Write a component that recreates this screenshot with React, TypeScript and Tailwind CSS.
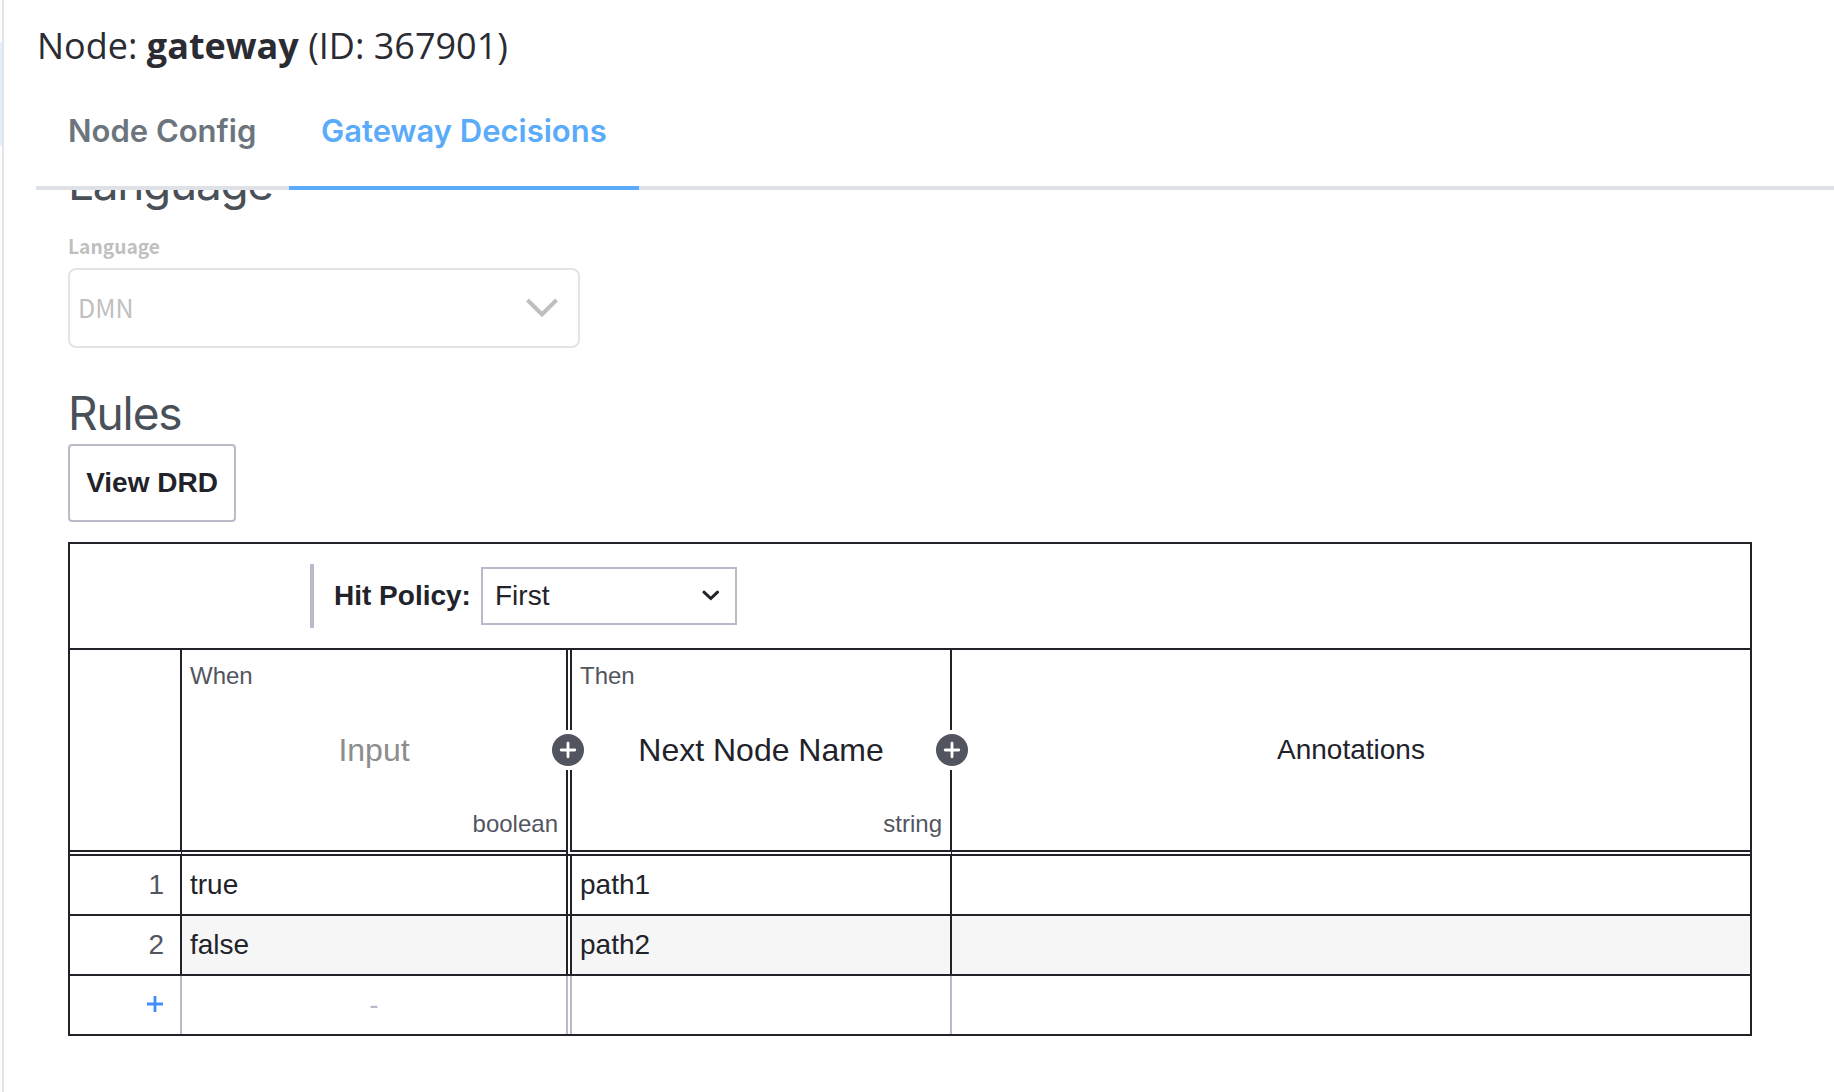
import React from "react";

const LINE = "bg-[#22232a]";

function AddColumn() {
  return (
    <span className="absolute -right-[18px] top-[80px] z-10 flex h-10 w-8 items-center justify-center bg-white">
      <svg width="32" height="32" viewBox="0 0 32 32">
        <circle cx="16" cy="16" r="16" fill="#52555f" />
        <path d="M16 9.200v13.600M9.200 16h13.600" stroke="#fff" strokeWidth="2.800" strokeLinecap="round" />
      </svg>
    </span>
  );
}

function Header() {
  return (
    <div className="flex h-[200px] w-full">
      <div className="w-[110px]" />
      <div className={`w-0.5 ${LINE}`} />
      <div className="relative flex w-[384px] flex-col justify-between px-2 text-[#52555f]">
        <span className="mt-2 text-2xl leading-9">When</span>
        <span className="text-center text-[32px] leading-9 text-[#8d8d8d]">Input</span>
        <span className="mb-2 text-right text-2xl leading-9">boolean</span>
        <AddColumn />
      </div>
      <div className={`w-0.5 ${LINE}`} />
      <div className="w-0.5" />
      <div className={`w-0.5 ${LINE}`} />
      <div className="relative flex w-[378px] flex-col justify-between px-2 text-[#52555f]">
        <span className="mt-2 text-2xl leading-9">Then</span>
        <span className="text-center text-[32px] leading-9 text-[#22232a]">Next Node Name</span>
        <span className="mb-2 text-right text-2xl leading-9">string</span>
        <AddColumn />
      </div>
      <div className={`w-0.5 ${LINE}`} />
      <div className="flex flex-1 items-center justify-center text-[28px]">Annotations</div>
    </div>
  );
}

function DoubleRule() {
  return (
    <div className="flex h-1.5 w-full flex-col">
      <div className="flex h-0.5">
        <div className={`w-[498px] ${LINE}`} />
        <div className="w-0.5" />
        <div className={`flex-1 ${LINE}`} />
      </div>
      <div className="flex h-0.5">
        <div className={`ml-[111px] w-px ${LINE}`} />
        <div className={`ml-[384px] w-0.5 ${LINE}`} />
        <div className={`ml-[383px] w-px ${LINE}`} />
      </div>
      <div className={`h-0.5 ${LINE}`} />
    </div>
  );
}

function Rule({ n, input, output, shaded }: { n: string; input: string; output: string; shaded?: boolean }) {
  const fill = shaded ? "bg-[#f6f6f6]" : "";
  return (
    <div className="flex h-[58px] w-full text-[28px] leading-[58px]">
      <div className="w-[110px] pr-4 text-right text-[#52555f]">{n}</div>
      <div className={`w-0.5 ${LINE}`} />
      <div className={`w-[384px] pl-2 ${fill}`}>{input}</div>
      <div className={`w-0.5 ${LINE}`} />
      <div className="w-0.5" />
      <div className={`w-0.5 ${LINE}`} />
      <div className={`w-[378px] pl-2 ${fill}`}>{output}</div>
      <div className={`w-0.5 ${LINE}`} />
      <div className={`flex-1 ${fill}`} />
    </div>
  );
}

function EmptyRule() {
  return (
    <div className="flex h-[58px] w-full text-[28px] leading-[58px] text-[#b9bbc8]">
      <div className="flex w-[110px] justify-end pr-[17px] pt-5">
        <svg width="16" height="16" viewBox="0 0 16 16">
          <path d="M8 0v16M0 8h16" stroke="#3f8efc" strokeWidth="2.800" />
        </svg>
      </div>
      <div className="w-0.5 bg-[#b9bbc8]" />
      <div className="w-[384px] text-center">-</div>
      <div className="w-0.5 bg-[#b9bbc8]" />
      <div className="w-0.5" />
      <div className="w-0.5 bg-[#b9bbc8]" />
      <div className="w-[378px]" />
      <div className="w-0.5 bg-[#b9bbc8]" />
      <div className="flex-1" />
    </div>
  );
}

export default function App() {
  return (
    <div className="flex h-[1092px] w-[1834px] overflow-hidden bg-white font-['Liberation_Sans',sans-serif] text-[#22232a]">
      <div className="w-0.5 pt-[42px]">
        <div className="h-[104px] bg-[#e4effb]" />
      </div>
      <div className="w-0.5 bg-[#e2e4ec]" />
      <main className="flex min-w-0 flex-1 flex-col pl-8">
        <h1 className="h-[92px] whitespace-nowrap pl-px pt-[21px] font-['Open_Sans',sans-serif] text-[36px] leading-[50px] text-[#2b2c33]">
          Node: <b>gateway</b> (ID: 367901)
        </h1>
        <nav className="flex h-[98px] border-b-4 border-[#dee2e6] font-['Inter',sans-serif] text-[31px] font-semibold leading-[78px] text-[#6c757d]">
          <div className="w-[253px] whitespace-nowrap pl-8">Node Config</div>
          <div className="h-[98px] w-[350px] whitespace-nowrap border-b-4 border-[#5aabf9] pl-8 text-[#5aabf9]">Gateway Decisions</div>
        </nav>
        <section className="flex flex-1 flex-col overflow-hidden pl-8">
          <h2 className="-mt-[37px] h-[81px] shrink-0 font-['Inter',sans-serif] text-[46px] leading-[60px] tracking-[-1.3px] text-[#495057]">Language</h2>
          <label className="h-[34px] shrink-0 font-['Noto_Sans_CJK_SC',sans-serif] text-[19.200px] font-bold leading-[24px] text-[#bfbfbf]">Language</label>
          <div className="flex h-20 w-[512px] shrink-0 items-center justify-between rounded-lg border-2 border-[#e4e4e4] pl-2 pr-5 font-['Noto_Sans_CJK_SC',sans-serif] text-[25px] text-[#bfbfbf]">
            <span>DMN</span>
            <svg width="32" height="20" viewBox="0 0 32 20" fill="none">
              <path d="M1.500 2L16 16.500L30.500 2" stroke="#bfbfbf" strokeWidth="4" />
            </svg>
          </div>
          <h2 className="mt-[35px] h-[61px] shrink-0 font-['Inter',sans-serif] text-[46px] leading-[60px] tracking-[-1.1px] text-[#495057]">Rules</h2>
          <button className="h-[78px] w-[168px] shrink-0 rounded border-2 border-[#b9bbc8] pb-px text-[28px] font-bold">View DRD</button>
          <div className="mt-5 flex w-[1684px] shrink-0 flex-col border-2 border-[#22232a]">
            <div className="flex h-[104px] items-center pl-[240px]">
              <div className="h-16 w-1 bg-[#b9bbc8]" />
              <span className="ml-5 w-[147px] whitespace-nowrap text-[28px] font-bold">Hit Policy:</span>
              <div className="flex h-[58px] w-[256px] items-center justify-between border-2 border-[#b9bbc8] pl-3 pr-4 text-[28px]">
                First
                <svg className="mb-0.5" width="17" height="11" viewBox="0 0 17 11" fill="none">
                  <path d="M2 2.200L8.800 8.500L15.500 2.200" stroke="#22232a" strokeWidth="3" strokeLinecap="round" />
                </svg>
              </div>
            </div>
            <div className={`h-0.5 ${LINE}`} />
            <Header />
            <DoubleRule />
            <Rule n="1" input="true" output="path1" />
            <div className={`h-0.5 ${LINE}`} />
            <Rule n="2" input="false" output="path2" shaded />
            <div className={`h-0.5 ${LINE}`} />
            <EmptyRule />
          </div>
        </section>
      </main>
    </div>
  );
}
